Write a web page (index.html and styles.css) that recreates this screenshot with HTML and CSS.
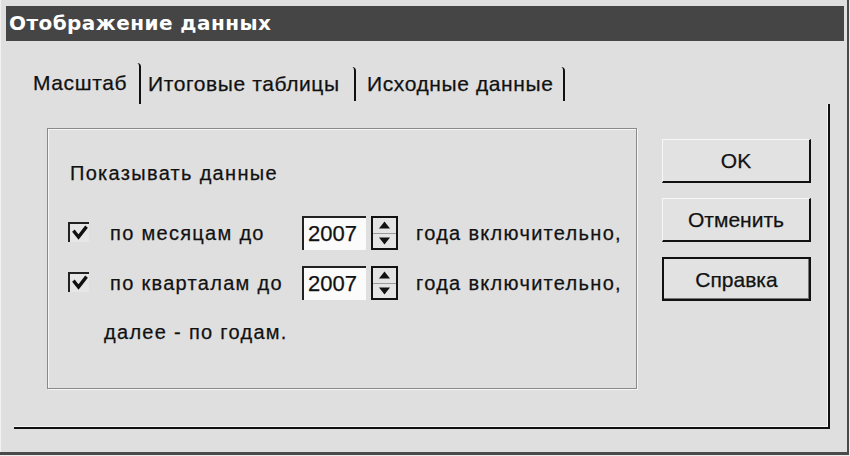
FILE: index.html
```html
<!DOCTYPE html>
<html lang="ru">
<head>
<meta charset="utf-8">
<title>Отображение данных</title>
<link rel="stylesheet" href="styles.css">
</head>
<body>
<div class="window">
  <div class="titlebar">Отображение данных</div>
  <div class="tabs">
    <div class="tab tab-active">Масштаб</div>
    <div class="tab tab-2">Итоговые таблицы</div>
    <div class="tab tab-3">Исходные данные</div>
  </div>
  <div class="panel">
    <div class="group">
      <div class="group-title">Показывать данные</div>
      <div class="row">
        <span class="check"><svg viewBox="0 0 16 16" width="16" height="16"><path d="M2.5 7 L6.5 12 L13.5 3" fill="none" stroke="#111" stroke-width="3.4" stroke-linecap="square"/></svg></span>
        <span class="label">по месяцам до</span>
        <span class="field">2007</span>
        <span class="spin">
          <span class="spin-half"><svg viewBox="0 0 12 8" width="13" height="8"><path d="M0.5 7.5 L6 0.5 L11.5 7.5 Z" fill="#111"/></svg></span>
          <span class="spin-half spin-down"><svg viewBox="0 0 12 8" width="13" height="8"><path d="M0.5 0.5 L6 7.5 L11.5 0.5 Z" fill="#111"/></svg></span>
        </span>
        <span class="suffix">года включительно,</span>
      </div>
      <div class="row row-2">
        <span class="check"><svg viewBox="0 0 16 16" width="16" height="16"><path d="M2.5 7 L6.5 12 L13.5 3" fill="none" stroke="#111" stroke-width="3.4" stroke-linecap="square"/></svg></span>
        <span class="label">по кварталам до</span>
        <span class="field">2007</span>
        <span class="spin">
          <span class="spin-half"><svg viewBox="0 0 12 8" width="13" height="8"><path d="M0.5 7.5 L6 0.5 L11.5 7.5 Z" fill="#111"/></svg></span>
          <span class="spin-half spin-down"><svg viewBox="0 0 12 8" width="13" height="8"><path d="M0.5 0.5 L6 7.5 L11.5 0.5 Z" fill="#111"/></svg></span>
        </span>
        <span class="suffix">года включительно,</span>
      </div>
      <div class="note">далее - по годам.</div>
    </div>
    <div class="buttons">
      <div class="btn">OK</div>
      <div class="btn">Отменить</div>
      <div class="btn btn-default">Справка</div>
    </div>
  </div>
</div>
</body>
</html>
```

FILE: styles.css
```css
* { box-sizing: border-box; }
html, body {
  margin: 0;
  padding: 0;
  background: #ececec;
}
body {
  width: 850px;
  height: 456px;
  overflow: hidden;
  font-family: "Liberation Sans", Arial, sans-serif;
  color: #111;
}
.window {
  width: 849px;
  height: 455px;
  padding-top: 6px;
  background: #dfdfdf;
  border-right: 2px solid #4a4a4a;
  border-bottom: 3px solid #4a4a4a;
  box-shadow: inset 1px 0 0 #f2f2f2;
}
.titlebar {
  height: 35px;
  margin-left: 6px;
  margin-right: 3px;
  padding-left: 3px;
  background: #454545;
  color: #fff;
  font-family: "DejaVu Sans", Verdana, sans-serif;
  font-weight: bold;
  font-size: 20px;
  line-height: 35px;
  letter-spacing: 0.45px;
}
.tabs {
  display: flex;
  align-items: center;
  height: 41px;
  margin-top: 22px;
  padding-left: 14px;
  font-size: 21px;
  letter-spacing: 0.6px;
  -webkit-text-stroke: 0.25px #111;
}
.tab {
  flex: none;
  height: 34px;
  line-height: 34px;
  border-right: 2px solid #111;
  border-top-right-radius: 4px;
  white-space: nowrap;
}
.tab-active {
  width: 127px;
  height: 41px;
  line-height: 40px;
  padding-left: 19px;
}
.tab-2 {
  width: 215px;
  padding-left: 7px;
}
.tab-3 {
  width: 209px;
  padding-left: 11px;
}
.panel {
  display: flex;
  align-items: flex-start;
  width: 816px;
  height: 325px;
  margin-left: 14px;
  padding: 24px 0 0 33px;
  border-right: 2px solid #111;
  border-bottom: 2px solid #111;
  box-shadow: inset -1px -1px 0 #f4f4f4;
}
.group {
  flex: none;
  width: 590px;
  height: 261px;
  padding-top: 32px;
  border: 1px solid #8a8a8a;
  box-shadow: inset 1px 1px 0 #f6f6f6, 1px 1px 0 #f6f6f6;
  font-size: 20px;
  letter-spacing: 1.3px;
  -webkit-text-stroke: 0.25px #111;
}
.group-title {
  margin-left: 22px;
  line-height: 24px;
}
.row {
  display: flex;
  align-items: center;
  height: 34px;
  margin-top: 31px;
  margin-left: 20px;
  white-space: nowrap;
}
.row-2 {
  margin-top: 16px;
}
.check {
  flex: none;
  display: flex;
  align-items: center;
  justify-content: center;
  width: 21px;
  height: 20px;
  margin-top: -3px;
  margin-right: 21px;
  padding: 1px 0 0 1px;
  border-left: 2px solid #222;
  border-top: 2px solid #222;
  background: #e6e6e6;
}
.label {
  flex: none;
  width: 192px;
}
.field {
  flex: none;
  width: 64px;
  height: 34px;
  padding-left: 4px;
  line-height: 32px;
  font-size: 22px;
  letter-spacing: 0;
  background: #fbfbfb;
  border-left: 2px solid #222;
  border-top: 2px solid #222;
}
.spin {
  flex: none;
  display: flex;
  flex-direction: column;
  width: 27px;
  height: 34px;
  margin-left: 5px;
  border: 2px solid #111;
  background: #e4e4e4;
}
.spin-half {
  flex: 1;
  display: flex;
  align-items: center;
  justify-content: center;
}
.spin-down {
  border-top: 1px solid #9a9a9a;
}
.suffix {
  margin-left: 18px;
}
.note {
  margin-top: 20px;
  margin-left: 56px;
  line-height: 24px;
}
.buttons {
  flex: none;
  display: flex;
  flex-direction: column;
  gap: 15px;
  width: 149px;
  margin-top: 11px;
  margin-left: 25px;
}
.btn {
  height: 44px;
  line-height: 42px;
  text-align: center;
  font-size: 21px;
  -webkit-text-stroke: 0.25px #111;
  border-top: 1px solid #f7f7f7;
  border-left: 1px solid #f7f7f7;
  border-right: 2px solid #111;
  border-bottom: 2px solid #111;
  background: #e2e2e2;
}
.btn-default {
  border: 2px solid #111;
  box-shadow: inset -1px -1px 0 #777;
}
```
